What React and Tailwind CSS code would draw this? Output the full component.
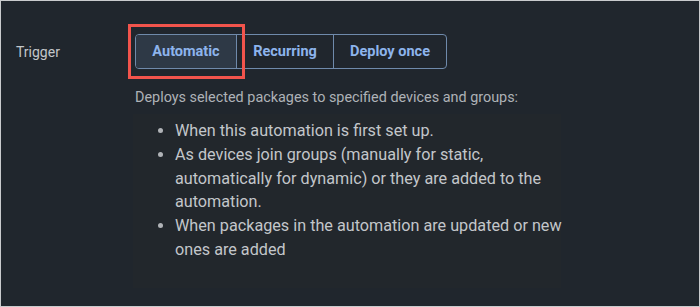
export default function App() {
  const bullets = [
    "When this automation is first set up.",
    "As devices join groups (manually for static, automatically for dynamic) or they are added to the automation.",
    "When packages in the automation are updated or new ones are added",
  ];

  return (
    <div className="w-[700px] h-[307px] bg-[#20262d] border border-[#c9cbcd] overflow-hidden" style={{ fontFamily: "Roboto, 'Noto Sans', sans-serif" }}>
      <div className="flex pt-[33px]">
        <div className="w-[134px] pl-[15px] pt-[8px] text-[14px] text-[#c3c6ca]">Trigger</div>
        <div className="flex flex-col">
          <div className="relative flex w-fit">
            <div className="flex h-[35px] rounded-[4px] border border-[#6f8aab] overflow-hidden text-[14.5px] font-bold text-[#8db4ec]">
              <div className="w-[101px] flex items-center justify-center bg-[#2e3946] border-r border-[#6f8aab]">Automatic</div>
              <div className="w-[97px] flex items-center justify-center border-r border-[#6f8aab]">Recurring</div>
              <div className="w-[112px] flex items-center justify-center">Deploy once</div>
            </div>
            <div className="absolute left-[-7px] top-[-10px] w-[117px] h-[55px] border-[3px] border-[#f2544c]" />
          </div>
          <p className="mt-[20px] text-[14.4px] leading-[18px] text-[#aeb2b7]">Deploys selected packages to specified devices and groups:</p>
          <div className="w-[428px] h-[174px] bg-[#22272c] mt-[7px] -ml-[2px] pl-[2px]">
            <ul className="pt-[5px] pl-[40px] list-disc text-[16.2px] leading-[23.8px] text-[#c3c6ca] w-[436px]">
              {bullets.map((b, i) => (
                <li key={i} className="marker:text-[#b0b3b7]">{b}</li>
              ))}
            </ul>
          </div>
        </div>
      </div>
    </div>
  );
}
